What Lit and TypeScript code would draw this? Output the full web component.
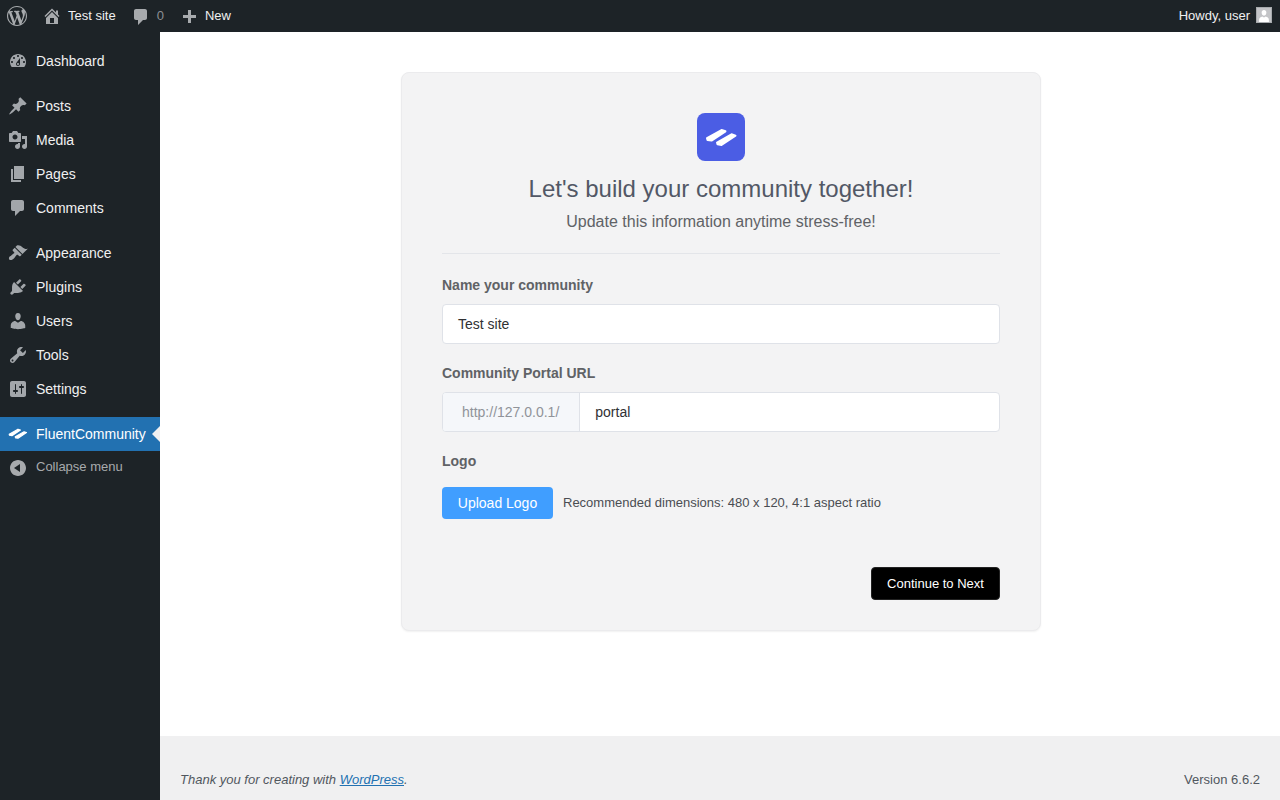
import { LitElement, html, css, svg } from "lit";
import { customElement } from "lit/decorators.js";

const P: Record<string, string> = {
  wp: "M20 10c0-5.51-4.49-10-10-10C4.48 0 0 4.49 0 10c0 5.52 4.48 10 10 10 5.51 0 10-4.48 10-10zM7.78 15.37L4.37 6.22c.55-.02 1.17-.08 1.17-.08.5-.06.44-1.13-.06-1.11 0 0-1.45.11-2.37.11-.18 0-.37 0-.58-.01C4.12 2.69 6.87 1.11 10 1.11c2.33 0 4.45.87 6.05 2.34-.68-.11-1.65.39-1.65 1.58 0 .74.45 1.36.9 2.1.35.61.55 1.36.55 2.46 0 1.49-1.4 5-1.4 5l-3.03-8.37c.54-.02.82-.17.82-.17.5-.05.44-1.25-.06-1.22 0 0-1.44.12-2.38.12-.87 0-2.33-.12-2.33-.12-.5-.03-.56 1.2-.06 1.22l.92.08 1.26 3.41zM17.41 10c.24-.64.74-1.87.43-4.25.7 1.29 1.05 2.71 1.05 4.25 0 3.29-1.73 6.24-4.4 7.78.97-2.59 1.94-5.2 2.92-7.78zM6.1 18.09C3.12 16.65 1.11 13.53 1.11 10c0-1.3.23-2.48.72-3.59C3.25 10.3 4.67 14.2 6.1 18.09zm4.03-6.63l2.58 6.98c-.86.29-1.76.45-2.71.45-.79 0-1.57-.11-2.29-.33.81-2.38 1.62-4.74 2.42-7.1z",
  home: "M16 8.5l1.53 1.53-1.06 1.06L10 4.62l-6.47 6.47-1.06-1.06L10 2.5l4 4v-2h2v4zm-6-2.46l6 5.99V18H4v-5.97zM12 17v-5H8v5h4z",
  comment: "M5 2h9c1.1 0 2 .9 2 2v7c0 1.1-.9 2-2 2h-2l-5 5v-5H5c-1.1 0-2-.9-2-2V4c0-1.1.9-2 2-2z",
  plus: "M17 7v3h-5v5H9v-5H4V7h5V2h3v5h5z",
  dashboard: "M3.76 16h12.48c1.1-1.37 1.76-3.11 1.76-5 0-4.42-3.58-8-8-8s-8 3.58-8 8c0 1.89.66 3.63 1.76 5zM10 4c.55 0 1 .45 1 1s-.45 1-1 1-1-.45-1-1 .45-1 1-1zM6 6c.55 0 1 .45 1 1s-.45 1-1 1-1-.45-1-1 .45-1 1-1zm8 0c.55 0 1 .45 1 1s-.45 1-1 1-1-.45-1-1 .45-1 1-1zm-5.37 5.55L12 7v6c0 1.1-.9 2-2 2s-2-.9-2-2c0-.57.24-1.08.63-1.45zM4 10c.55 0 1 .45 1 1s-.45 1-1 1-1-.45-1-1 .45-1 1-1zm12 0c.55 0 1 .45 1 1s-.45 1-1 1-1-.45-1-1 .45-1 1-1zm-5 3c0-.55-.45-1-1-1s-1 .45-1 1 .45 1 1 1 1-.45 1-1z",
  pin: "M10.44 3.02l1.82-1.82 6.36 6.35-1.83 1.82c-1.05-.68-2.48-.57-3.41.36l-.75.75c-.92.93-1.04 2.35-.35 3.41l-1.83 1.82-2.41-2.41-2.8 2.79c-.42.42-3.38 2.71-3.8 2.29s1.86-3.39 2.28-3.81l2.79-2.79L4.1 9.36l1.83-1.82c1.05.69 2.48.57 3.4-.36l.75-.75c.93-.92 1.05-2.35.36-3.41z",
  media: "M13 11V4c0-.55-.45-1-1-1h-1.67L9 1H5L3.67 3H2c-.55 0-1 .45-1 1v7c0 .55.45 1 1 1h10c.55 0 1-.45 1-1zM7 4.5c1.38 0 2.5 1.12 2.5 2.5S8.38 9.5 7 9.5 4.5 8.38 4.5 7 5.62 4.5 7 4.5zM14 6h5v10.5c0 1.38-1.12 2.5-2.5 2.5S14 17.88 14 16.5s1.12-2.5 2.5-2.5c.17 0 .34.02.5.05V9h-3V6zm-4 8.05V13h2v3.5c0 1.38-1.12 2.5-2.5 2.5S7 17.88 7 16.5 8.12 14 9.5 14c.17 0 .34.02.5.05z",
  page: "M6 15V2h10v13H6zm-1 1h8v2H3V5h2v11z",
  brush: "M14.48 11.06L7.41 3.99l1.5-1.5c.5-.56 2.3-.47 3.51.32 1.21.8 1.43 1.28 2.91 2.1 1.18.64 2.45 1.26 4.45.85zm-.71.71L6.7 4.7 4.93 6.47c-.39.39-.39 1.02 0 1.41l1.06 1.06c.39.39.39 1.03 0 1.42-.6.6-1.43 1.11-2.21 1.69-.35.26-.7.53-1.01.84C1.43 13.23.4 14.85 1.2 16.5l.3.3c1.65.8 3.27-.23 4.58-1.57.31-.31.58-.66.84-1.02.57-.78 1.08-1.61 1.69-2.21.39-.39 1.02-.39 1.41 0l1.06 1.06c.39.39 1.02.39 1.41 0z",
  plugin: "M13.11 4.36L9.87 7.6 8 5.73l3.24-3.24c.35-.34 1.05-.2 1.56.32.52.51.66 1.21.31 1.55zm-8 1.77l.91-1.12 9.01 9.01-1.19.84c-.71.71-2.63 1.16-3.82 1.16H6.14L4.9 17.26c-.59.59-1.54.59-2.12 0-.59-.58-.59-1.53 0-2.12l1.24-1.24v-3.88c0-1.13.4-3.19 1.09-3.89zm7.26 3.97l3.24-3.24c.34-.35 1.04-.21 1.55.31.52.51.66 1.21.31 1.55l-3.24 3.25z",
  users: "M10 9.25c-2.27 0-2.73-3.44-2.73-3.44C7 4.02 7.82 2 9.97 2c2.16 0 2.98 2.02 2.71 3.81 0 0-.41 3.44-2.68 3.44zm0 2.57L12.72 10c2.39 0 4.52 2.33 4.52 4.53v2.49s-3.65 1.13-7.24 1.13c-3.65 0-7.24-1.13-7.24-1.13v-2.49c0-2.25 1.94-4.48 4.47-4.48z",
  tools: "M16.68 9.77c-1.34 1.34-3.3 1.67-4.95.99l-5.41 6.52c-.99.99-2.59.99-3.58 0s-.99-2.59 0-3.57l6.52-5.42c-.68-1.65-.35-3.61.99-4.95 1.28-1.28 3.12-1.62 4.72-1.06l-2.89 2.89 2.82 2.82 2.86-2.87c.53 1.58.18 3.39-1.08 4.65zM3.81 16.21c.4.39 1.04.39 1.43 0 .4-.4.4-1.04 0-1.43-.39-.4-1.03-.4-1.43 0-.39.39-.39 1.03 0 1.43z",
  settings: "M18 16V4c0-1.1-.9-2-2-2H4c-1.1 0-2 .9-2 2v12c0 1.1.9 2 2 2h12c1.1 0 2-.9 2-2zM8 11h1c.55 0 1 .45 1 1s-.45 1-1 1H8v1.5c0 .28-.22.5-.5.5s-.5-.22-.5-.5V13H6c-.55 0-1-.45-1-1s.45-1 1-1h1V5.5c0-.28.22-.5.5-.5s.5.22.5.5V11zm5-2h-1c-.55 0-1-.45-1-1s.45-1 1-1h1V5.5c0-.28.22-.5.5-.5s.5.22.5.5V7h1c.55 0 1 .45 1 1s-.45 1-1 1h-1v5.5c0 .28-.22.5-.5.5s-.5-.22-.5-.5V9z",
  collapse: "M10 2c4.42 0 8 3.58 8 8s-3.58 8-8 8-8-3.58-8-8 3.58-8 8-8zm2 12V6l-6 4z",
  avatar: "M10 11c-2.300 0-3.400-2.400-3.400-4.500C6.600 4.300 8 3 10 3s3.400 1.300 3.400 3.500c0 2.100-1.100 4.500-3.400 4.500zM3 20v-3c0-2.700 2.500-4.300 4.500-4.800L10 13.700l2.500-1.500c2 .5 4.500 2.100 4.500 4.800v3z",
};

const icon = (name: string, cls = "") =>
  html`<svg class="ic ${cls}" viewBox="0 0 20 20" aria-hidden="true">${svg`<path d=${P[name]}></path>`}</svg>`;

const fluent = (cls: string) =>
  html`<svg class=${cls} viewBox="0 0 33 19" aria-hidden="true">${svg`<polygon points="2,10.200 16.500,2 20.500,3.300 6.500,12.600 2.500,12"></polygon><polygon points="12,14.500 26.500,6.300 30.500,7.600 16.500,16.900 12.500,16.300"></polygon>`}</svg>`;

const groups = [
  [["dashboard", "Dashboard"]],
  [["pin", "Posts"], ["media", "Media"], ["page", "Pages"], ["comment", "Comments"]],
  [["brush", "Appearance"], ["plugin", "Plugins"], ["users", "Users"], ["tools", "Tools"], ["settings", "Settings"]],
];

@customElement("app-root")
export class AppRoot extends LitElement {
  static styles = css`
    :host { display: block; font-family: "Liberation Sans", Arial, sans-serif; color: #3c434a; font-size: 13px; }
    * { box-sizing: border-box; }
    .shell { height: 800px; display: grid; grid-template-rows: 32px 1fr; grid-template-columns: 160px 1fr; overflow: hidden; background: #f0f0f1; }
    .ic { width: 20px; height: 20px; fill: currentColor; display: block; flex: none; }

    .bar { grid-column: 1 / 3; background: #1d2327; color: #f0f0f1; display: flex; align-items: center; justify-content: space-between; padding-right: 8px; }
    .bar-left, .bar-right { display: flex; align-items: center; height: 32px; }
    .bar-ic { color: #a7aaad; }
    .logo-item { padding: 0 7px; }
    .bar-item { display: flex; align-items: center; gap: 6px; padding: 0 8px; line-height: 30px; }
    .muted { color: #8c8f94; }
    .bar-item.count { gap: 6px; padding-left: 7px; padding-right: 7px; }
    .bar-item.count .ic { margin-top: 2px; }
    .bar-item.new { gap: 6px; padding-left: 8px; }
    .bar-item.new .ic { margin-top: 4px; }
    .howdy { margin-right: 6px; line-height: 30px; }
    .avatar { width: 16px; height: 16px; margin-top: -2px; background: #c3c4c7; border: 1px solid #a7aaad; display: block; overflow: hidden; }
    .avatar .ic { width: 14px; height: 14px; color: #fff; }

    .side { background: #1d2327; padding-top: 12px; color: #f0f0f1; font-size: 14px; }
    .group { margin-bottom: 11px; }
    .row { height: 34px; display: flex; align-items: center; }
    .row .slot { width: 36px; display: flex; justify-content: center; color: #a2a6aa; flex: none; }
    .row.on { background: #2271b1; color: #fff; position: relative; }
    .row.on::after { content: ""; position: absolute; right: 0; top: 50%; margin-top: -8px; border: 8px solid transparent; border-right-color: #f0f0f1; border-left-width: 0; }
    .row.on .slot { color: #fff; }
    .side-logo { width: 20px; height: 11.5px; fill: #fff; stroke: #fff; stroke-width: 2; stroke-linejoin: round; display: block; }
    .row.collapse { color: #a7aaad; font-size: 13px; height: 32px; }
    .row.collapse span:last-child { position: relative; top: -1px; }
    .row.collapse .slot { color: #a7aaad; margin-top: 1px; }

    .main { display: grid; grid-template-rows: 704px 1fr; min-width: 0; }
    .content { background: #fff; padding-top: 40px; display: flex; justify-content: center; padding-left: 2px; }
    .card { width: 640px; height: 559px; background: #f3f3f4; border: 1px solid #ebebed; border-radius: 8px; box-shadow: 0 1px 2px rgba(0, 0, 0, .06); padding: 40px 40px 30px; display: flex; flex-direction: column; }
    .head { text-align: center; padding-bottom: 19px; border-bottom: 1px solid #e3e5e9; margin-bottom: 21px; }
    .brand { width: 48px; height: 48px; margin: 0 auto 12px; border-radius: 8px; background: #4b5de4; display: flex; align-items: center; justify-content: center; }
    .brand-logo { width: 33px; height: 19px; fill: #fff; stroke: #fff; stroke-width: 2; stroke-linejoin: round; display: block; }
    h1 { margin: 0 0 5px; font-size: 24px; line-height: 32px; font-weight: 400; color: #525866; }
    .sub { font-size: 16px; line-height: 24px; color: #606266; }
    label { display: block; font-weight: 700; font-size: 14px; line-height: 20px; color: #606266; margin-bottom: 9px; }
    .field { margin-bottom: 19px; }
    .input { height: 40px; background: #fff; border: 1px solid #dfe2e8; border-radius: 4px; display: flex; align-items: center; font-size: 14px; color: #303133; padding: 0 15px; overflow: hidden; }
    .input.url { padding: 0; }
    .prefix { height: 100%; background: #f5f7fa; border-right: 1px solid #dfe2e8; color: #909399; display: flex; align-items: center; padding: 0 20px 0 19px; }
    .value { padding: 0 15px; }
    .upload { display: flex; align-items: center; gap: 10px; margin-top: 16px; font-size: 13px; color: #4a4d52; }
    .upload-hint { position: relative; top: -1px; }
    .btn-up { height: 32px; width: 111px; border-radius: 4px; background: #409eff; color: #fff; font-size: 14px; display: flex; align-items: center; justify-content: center; }
    .actions { margin-top: auto; display: flex; justify-content: flex-end; }
    .btn-next { height: 33px; width: 129px; border-radius: 4px; background: #000; border: 1px solid #222; color: #fff; font-size: 13px; display: flex; align-items: center; justify-content: center; }

    .foot { padding: 0 20px 11px; display: flex; justify-content: space-between; align-items: flex-end; color: #50575e; font-size: 13px; line-height: 18px; }
    .foot em a { color: #2271b1; }
  `;

  render() {
    return html`<div class="shell">
      <header class="bar">
        <div class="bar-left">
          <div class="logo-item bar-ic">${icon("wp")}</div>
          <div class="bar-item first">${icon("home", "bar-ic")}<span>Test site</span></div>
          <div class="bar-item count">${icon("comment", "bar-ic")}<span class="muted">0</span></div>
          <div class="bar-item new">${icon("plus", "bar-ic")}<span>New</span></div>
        </div>
        <div class="bar-right">
          <span class="howdy">Howdy, user</span>
          <span class="avatar">${icon("avatar")}</span>
        </div>
      </header>
      <nav class="side">
        ${groups.map(
          (g) => html`<div class="group">
            ${g.map(([i, t]) => html`<div class="row"><span class="slot">${icon(i)}</span><span>${t}</span></div>`)}
          </div>`
        )}
        <div class="row on"><span class="slot">${fluent("side-logo")}</span><span>FluentCommunity</span></div>
        <div class="row collapse"><span class="slot">${icon("collapse")}</span><span>Collapse menu</span></div>
      </nav>
      <div class="main">
        <main class="content">
          <section class="card">
            <div class="head">
              <div class="brand">${fluent("brand-logo")}</div>
              <h1>Let's build your community together!</h1>
              <div class="sub">Update this information anytime stress-free!</div>
            </div>
            <div class="field">
              <label>Name your community</label>
              <div class="input">Test site</div>
            </div>
            <div class="field">
              <label>Community Portal URL</label>
              <div class="input url"><span class="prefix">http://127.0.0.1/</span><span class="value">portal</span></div>
            </div>
            <div>
              <label>Logo</label>
              <div class="upload"><span class="btn-up">Upload Logo</span><span class="upload-hint">Recommended dimensions: 480 x 120, 4:1 aspect ratio</span></div>
            </div>
            <div class="actions"><span class="btn-next">Continue to Next</span></div>
          </section>
        </main>
        <footer class="foot">
          <em>Thank you for creating with <a href="#">WordPress</a>.</em>
          <span>Version 6.6.2</span>
        </footer>
      </div>
    </div>`;
  }
}
